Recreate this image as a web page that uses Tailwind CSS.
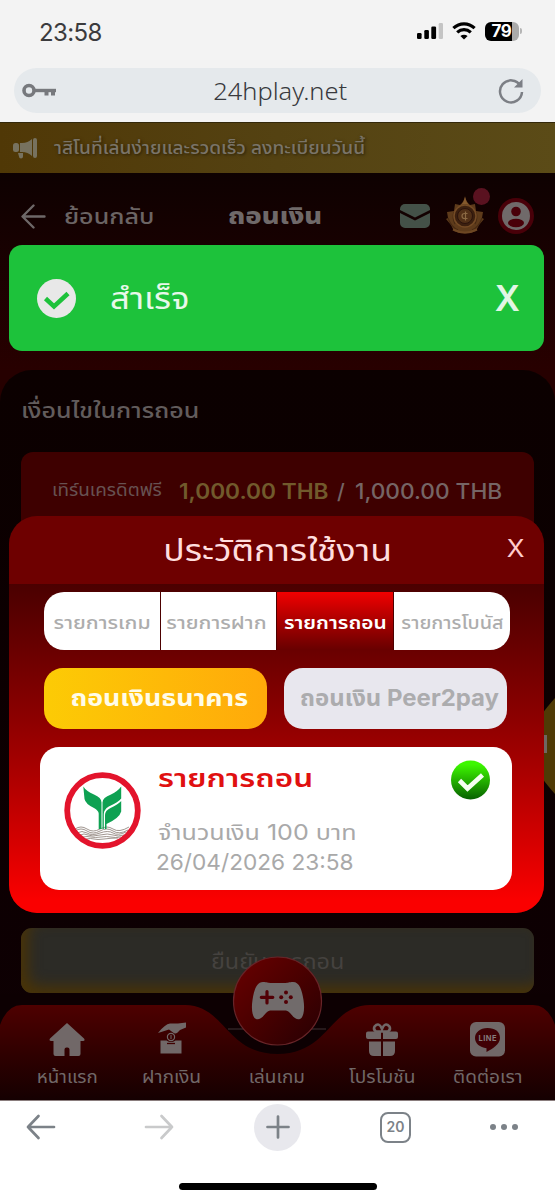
<!DOCTYPE html>
<html lang="th">
<head>
<meta charset="utf-8">
<meta name="viewport" content="width=device-width, initial-scale=1">
<title>24hplay.net</title>
<script src="https://cdn.jsdelivr.net/npm/@tailwindcss/browser@4"></script>
</head>
<body class="w-[555px] h-[1200px] overflow-hidden bg-white">
<div class="relative w-[555px] h-[1200px] overflow-hidden flex flex-col font-['Inter','Noto_Sans_Thai','Noto_Sans',sans-serif] whitespace-nowrap">

  <!-- Status bar and address bar -->
  <header class="h-[122px] shrink-0 bg-[#f3f3f3] flex flex-col">
    <div class="h-[66px] pl-[39px] pr-[33px] flex items-center justify-between">
      <span class="text-[24px] leading-none text-[#3b3b3d] tracking-[-0.6px]">23:58</span>
      <div class="flex items-center gap-[9px] pb-[4px]">
        <svg width="27" height="18" viewBox="0 0 27 18"><rect x="1" y="11" width="4.600" height="6" rx="1.300"/><rect x="8.300" y="8" width="4.600" height="9" rx="1.300"/><rect x="15.300" y="4.500" width="4.800" height="12.500" rx="1.300"/><rect x="22.700" y="1" width="4.300" height="16" rx="1.300" fill="#c4c4c4"/></svg>
        <svg width="24" height="18" viewBox="0 0 24 18" fill="none" stroke="#000" stroke-width="3.200"><path d="M1.400 6.200C7.500.500 16.500.500 22.600 6.200"/><path d="M5.200 10.400c4-3.600 9.600-3.600 13.600 0"/><path d="M12 17.500 8.400 14c2.200-1.700 5-1.700 7.200 0z" fill="#000" stroke="none"/></svg>
        <div class="flex items-center gap-[1.500px]">
          <div class="w-[34px] h-[19px] rounded-[6px] bg-linear-to-r from-[#000] from-80% to-[#aaa] to-80% flex items-center justify-center"><span class="text-white font-bold text-[17px] leading-none tracking-[-0.5px]">79</span></div>
          <div class="w-[2px] h-[6px] rounded-r bg-[#b5b5b5]"></div>
        </div>
      </div>
    </div>
    <div class="mt-[2px] mx-[14px] h-[45px] rounded-full bg-[#e5e9ec] flex items-center justify-between pl-[8px] pr-[17px]">
      <svg width="35" height="15" viewBox="0 0 35 15" fill="none" stroke="#77797d"><circle cx="7" cy="7.500" r="5" stroke-width="3.600"/><path d="M12 7.500h22" stroke-width="3.400"/><path d="M24.500 7v5.500M31 7v5.500" stroke-width="4"/></svg>
      <span class="scale-x-[1.06] font-['Noto_Sans'] font-light text-[24px] leading-none text-[#38393d] mr-[-5px]">24hplay.net</span>
      <svg width="26" height="26" viewBox="0 0 26 26" fill="none" stroke="#7c7f85" stroke-width="2.500"><path d="M22.500 7.800A11 11 0 1 0 24 14"/><path d="M24.500 1v8.500h-8.500z" fill="#7c7f85" stroke="none"/></svg>
    </div>
  </header>

  <!-- Dimmed page -->
  <main class="h-[978px] shrink-0 bg-[#0c0002] flex flex-col">
    <div class="h-[51px] shrink-0 border-t border-[#33280a] bg-linear-to-r from-[#503806] via-[#544212] to-[#5b4b17] flex items-center pl-[13px] gap-4">
      <svg width="25" height="21" viewBox="0 0 25 21" fill="#77725f"><rect x="0" y="5" width="6" height="9" rx="2.500"/><path d="M7 5h2c4 0 7-1.500 10-4v17c-3-2.500-6-4-10-4H7z"/><rect x="20" y="0" width="4" height="20" rx="2"/><path d="M5 15h5v3.500a2 2 0 0 1-4 0z"/></svg>
      <span class="origin-left scale-x-[1.062] text-[18px] font-medium leading-none text-[#7a7468] [text-shadow:1px_1px_3px_#0008]">าสิโนที่เล่นง่ายและรวดเร็ว ลงทะเบียนวันนี้</span>
    </div>
    <div class="h-[197px] shrink-0 bg-linear-to-b from-[#0e0101] to-[#280000]">
      <div class="h-[86px] flex items-center pl-[21px] pr-[21px]">
        <svg width="25" height="25" viewBox="0 0 25 25" fill="none" stroke="#6e6868" stroke-width="2.400" stroke-linecap="round" stroke-linejoin="round"><path d="M12.500 1.500 1.500 12.500l11 11M2 12.500h21.500"/></svg>
        <span class="ml-[18px] w-[91px] origin-left scale-x-[1.14] text-[22px] font-medium leading-none text-[#6b6464]">ย้อนกลับ</span>
        <span class="ml-[73px] w-[94px] origin-left scale-x-[1.19] text-[23px] font-extrabold leading-none text-[#6f6969]">ถอนเงิน</span>
        <div class="ml-[78px] flex items-center gap-[16px]">
          <svg width="30" height="25" viewBox="0 0 30 25" fill="#445148"><path d="M0 6V5a5 5 0 0 1 5-5h20a5 5 0 0 1 5 5v1L15 13.500z"/><path d="M0 9l15 7.500L30 9v10a5 5 0 0 1-5 5H5a5 5 0 0 1-5-5z"/></svg>
          <div class="relative w-[38px] h-[38px] mt-[-2px]">
            <svg width="38" height="38" viewBox="0 0 38 38">
              <path d="M19 0Q20 6 24 9l5-1 1 7 7 1-1 6 2 1-5 6-3 6q-11 5-22 0l-3-6-5-6 2-1-1-6 7-1 1-7 5 1Q18 6 19 0z" fill="#5e3b1b"/>
              <path d="M2 22q3 9 10 12M36 22q-3 9-10 12M8 16q-2 6 1 12M30 16q2 6-1 12" stroke="#472a13" stroke-width="1.200" fill="none"/>
              <path d="M19 1q-1 5-4 8 4-2 8 0-3-3-4-8z" fill="#84592c"/>
              <circle cx="19" cy="20" r="11" fill="#3c200f" stroke="#744b25" stroke-width="1.500"/><circle cx="19" cy="20" r="7.500" fill="#513017" stroke="#2b130c"/>
              <path d="M21.500 17.500h-3a2.500 2.500 0 0 0 0 5h3M19.500 15.500v9" stroke="#8b6a44" stroke-width="1.200" fill="none"/>
              <path d="M7 33.500c8 4 16 4 24 0" stroke="#6e4723" stroke-width="2" fill="none"/></svg>
            <div class="absolute left-[27px] top-[-8px] w-[17px] h-[17px] rounded-full bg-[#5a1220]"></div>
          </div>
          <svg class="ml-[-2px]" width="36" height="36" viewBox="0 0 36 36"><circle cx="18" cy="18" r="18" fill="#490009"/><circle cx="18" cy="18" r="14" fill="#706a6a"/><circle cx="18" cy="13.500" r="4.800" fill="#490009"/><ellipse cx="18" cy="25" rx="8" ry="4.200" fill="#490009"/></svg>
        </div>
      </div>
    </div>
    <section class="h-[730px] shrink-0 bg-[#260000]">
      <div class="h-full rounded-t-[32px] bg-linear-to-b from-[#0b0000] to-[#0e0003] flex flex-col">
        <h2 class="mt-[28px] ml-[21px] h-[54px] pt-[1px] origin-left scale-x-[1.137] text-[22px] font-medium leading-none text-[#625c5c]">เงื่อนไขในการถอน</h2>
        <div class="mx-[21px] h-[144px] shrink-0 rounded-[12px] bg-[#3e0000] pl-[31px] pt-[29px]">
          <div class="flex items-center h-[20px]">
            <div class="w-[127px] flex"><span class="origin-left scale-x-[1.11] text-[17px] leading-none text-[#675252] -mt-0.5">เทิร์นเครดิตฟรี</span></div>
            <div class="w-[158px] flex"><span class="origin-left scale-x-[1.08] text-[21px] font-semibold leading-none text-[#715a2c]">1,000.00 THB</span></div>
            <span class="w-[18px] text-[21px] font-medium leading-none text-[#756565]">/</span>
            <span class="origin-left scale-x-[1.08] text-[21px] font-medium leading-none text-[#756565]">1,000.00 THB</span>
          </div>
        </div>
        <div class="relative h-[332px] shrink-0 overflow-hidden">
          <svg class="absolute right-0 top-[102px]" width="20" height="96" viewBox="0 0 20 96"><path d="M20 0Q4 18 0 28v40q4 10 20 28z" fill="#4f3a05"/><rect x="8" y="37" width="4" height="18" fill="#6f6762"/></svg>
        </div>
      </div>
    </section>
  </main>

  <!-- Confirm button, partly under the bottom navigation -->
  <button class="absolute left-[21px] top-[928px] w-[513px] h-[65px] rounded-[11px] bg-[#2c2b26] shadow-[inset_7px_-7px_14px_#493307] text-[22px] leading-none text-[#45423f]"><span class="inline-block scale-x-[1.065]">ยืนยันการถอน</span></button>

  <nav class="absolute left-0 top-[950px] w-[555px] h-[150px]">
    <svg class="absolute inset-0" width="555" height="150" viewBox="0 0 555 150">
      <defs>
        <linearGradient id="nav" x1="0" y1="0" x2="0" y2="1"><stop offset="0" stop-color="#4e0000"/><stop offset=".5" stop-color="#300000"/><stop offset="1" stop-color="#150001"/></linearGradient>
        <linearGradient id="orb" x1="0" y1="0" x2="1" y2="1"><stop offset="0" stop-color="#6a0000"/><stop offset=".45" stop-color="#4c0000"/><stop offset="1" stop-color="#260003"/></linearGradient>
      </defs>
      <path d="M0 44h555v106H0z" fill="#0d0002"/>
      <path d="M228 79h98" stroke="#413334"/>
      <path d="M0 75Q7 55 22 55H185C225 55 226 104 277.500 104S330 55 370 55H533Q548 55 555 75V150H0z" fill="url(#nav)"/>
      <circle cx="277.500" cy="51" r="44" fill="url(#orb)" stroke="#682428" stroke-width="1.200"/>
      <path d="M263 32c4 0 5 1 8 1h14c3 0 4-1 8-1 6.500 0 9 8 10.500 18 1.500 10 0 17.500-3.500 19-4 1.500-7.500-3-10-6-2-2-3-2.500-6-2.500h-12c-3 0-4 .5-6 2.500-2.500 3-6 7.500-10 6-3.500-1.500-5-9-3.500-19 1.500-10 4-18 10.500-18z" fill="#716b6b"/>
      <path d="M267 41.500v11.500M261.300 47.300h11.500" stroke="#520006" stroke-width="3.200" stroke-linecap="round"/>
      <g fill="#520006"><circle cx="286" cy="42.500" r="2"/><circle cx="286" cy="52" r="2"/><circle cx="281.200" cy="47.300" r="2"/><circle cx="290.800" cy="47.300" r="2"/></g>
    </svg>
    <div class="relative h-full grid grid-cols-[134px_76px_134px_76px_135px] pt-[72px] text-[18px] leading-none text-[#716868]">
      <div class="flex flex-col items-center gap-[10px]"><svg width="36" height="36" viewBox="0 0 36 36" fill="#716868"><path d="M18 1 1 16.500q-1.500 2.500 1.500 2.500H4.500V32q0 2 2 2h9V27.500q0-2 2-2h1q2 0 2 2V34h9q2 0 2-2V19h2.500q2.500 0 1-2.500z"/></svg><span class="scale-x-[1.04]">หน้าแรก</span></div>
      <div class="flex flex-col items-center gap-[10px]"><svg width="30" height="36" viewBox="0 0 30 36" fill="#716868"><path d="M1 11Q8 2 13 1.500h8L29 0.500v5L23 8l-3 3q-2 1-4-.5l-4-3z"/><circle cx="14" cy="15" r="3.600" fill="none" stroke="#716868" stroke-width="1.200"/><path d="M14 13v4" stroke="#716868"/><path d="M3.500 18.500H9.500q4.500 3 9 0h6V31.500h-21z"/><path d="M10 21.500h8" stroke="#400000" stroke-width="1.300"/></svg><span class="scale-x-[1.07]">ฝากเงิน</span></div>
      <div class="flex flex-col items-center gap-[10px]"><span class="h-9"></span><span class="scale-x-[1.05]">เล่นเกม</span></div>
      <div class="flex flex-col items-center gap-[10px]"><svg width="32" height="36" viewBox="0 0 32 36" fill="#716868"><path d="M2 9.500h13V17H2q-2 0-2-2v-3.500q0-2 2-2zM17 9.500h13q2 0 2 2V15q0 2-2 2H17zM3 19.500h12V34H8q-5 0-5-5zM17 19.500h12V29q0 5-5 5h-7z"/><path d="M15 9.500h-5q-3-2-1.500-5Q13-.5 16 7q3-7.500 7.500-2.500 1.500 3-1.500 5z" fill="none" stroke="#716868" stroke-width="2.600"/></svg><span class="scale-x-[1.06]">โปรโมชัน</span></div>
      <div class="flex flex-col items-center gap-[10px]"><svg width="35" height="36" viewBox="0 0 35 36"><rect y="0" width="35" height="34.500" rx="6" fill="#716868"/><path d="M17.500 6C10 6 5 10.500 5 16s5 9.500 11.500 10.200V30C22 27 30 22.500 30 16S25 6 17.500 6z" fill="#400004"/><text x="17.500" y="19" text-anchor="middle" font-family="Inter" font-weight="700" font-size="7.500" textLength="18" fill="#857b7b">LINE</text></svg><span class="scale-x-[1.06]">ติดต่อเรา</span></div>
    </div>
  </nav>

  <!-- Success toast -->
  <div class="absolute left-[9px] top-[245px] w-[535px] h-[106px] rounded-[13px] bg-[#1dc23b] flex items-center pl-[28px] pr-[24px]">
    <svg width="39" height="39" viewBox="0 0 39 39"><circle cx="19.500" cy="19.500" r="19.500" fill="#e8e8e8"/><path d="M8.500 19.500l8.500 8L31 14.500" fill="none" stroke="#1dc23b" stroke-width="4.500"/></svg>
    <span class="ml-[34px] origin-left scale-x-[1.16] text-[30px] leading-none text-[#e8f8ea]">สำเร็จ</span>
    <span class="ml-auto text-[35px] font-semibold leading-none text-[#e2f6e5]">X</span>
  </div>

  <!-- History dialog -->
  <div class="absolute left-[9px] top-[516px] w-[535px] h-[397px] rounded-[28px] overflow-hidden bg-[#6e0000] flex flex-col">
    <div class="relative h-[68px] shrink-0 flex items-center justify-center">
      <h1 class="scale-x-[1.185] text-[30px] leading-none text-[#ffdede] mr-[-3px]">ประวัติการใช้งาน</h1>
      <span class="absolute right-[20px] top-[21px] origin-right scale-x-[1.08] text-[24px] leading-none text-[#ffcccc]">X</span>
    </div>
    <div class="grow bg-linear-to-b from-[#4a0000] via-[#a00000] via-52% to-[#fa0000] to-96% pt-[8px] pl-[31px]">
      <div class="ml-1 w-[466px] h-[58px] rounded-[20px] overflow-hidden grid grid-cols-[116px_115px_116px_116px] gap-x-[1px] text-[18px] font-medium leading-none text-[#adadad] bg-[#4c0000]">
        <div class="bg-white flex items-center justify-center pt-1"><span class="scale-x-[1.18]">รายการเกม</span></div>
        <div class="bg-white flex items-center justify-center pt-1 pr-1"><span class="scale-x-[1.18]">รายการฝาก</span></div>
        <div class="bg-linear-to-b from-[#f20000] to-[#680000] text-white font-semibold flex items-center justify-center pt-1"><span class="scale-x-[1.16]">รายการถอน</span></div>
        <div class="bg-white flex items-center justify-center pt-1"><span class="scale-x-[1.1]">รายการโบนัส</span></div>
      </div>
      <div class="ml-1 mt-[18px] flex gap-[17px] text-[23px] leading-none font-bold">
        <div class="w-[223px] h-[61px] rounded-[19px] bg-linear-to-r from-[#fccb05] to-[#ffa90a] text-[#fffce8] flex items-center justify-center pl-2"><span class="scale-x-[1.165]">ถอนเงินธนาคาร</span></div>
        <div class="w-[223px] h-[61px] rounded-[19px] bg-[#e8e7ee] text-[#acacae] flex items-center justify-center pl-2"><span class="scale-x-[1.042]">ถอนเงิน Peer2pay</span></div>
      </div>
      <div class="mt-[18px] w-[472px] h-[143px] rounded-[19px] bg-white flex">
        <svg class="ml-[23.500px] mt-[24.500px] shrink-0" width="77" height="77" viewBox="0 0 77 77">
          <circle cx="38.500" cy="38.500" r="35" fill="#fff"/>
          <path d="M11 57q6-4 12 0t13 0 13 0 16-2M11 59q6-4 12 0t13 0 13 0 15-1M13 61q5-3 10 0t13 0 13 0 13-1M16 63q4-2 8 0t12 0 13 0 11 0M19 65q4-1 8 0t10 0 10 0 10 0M22 67q5-1 8 0t10 0 14-1" fill="none" stroke="#958a83" stroke-width=".9"/>
          <path d="M19.300 14.500Q22 19 30 22.500q7.500 3 7.500 8V57h-2.800V41.500q-.2-3-4.700-5.500-8.500-4-9.500-9z" fill="#0ea152"/>
          <path d="M57.200 14.500Q54 19 47 22.500q-8.500 3-8.500 8V57h1.300V42q0-4.500 5-7.500 10-4.500 12.400-8z" fill="#0ea152"/>
          <path d="M57.200 29Q54 32.500 46.500 36q-5.500 2.500-5.500 7V57h1.500v-5q13-6 14.700-12.500z" fill="#0ea152"/>
          <circle cx="38.500" cy="38.500" r="35.300" fill="none" stroke="#e3142c" stroke-width="5.800"/>
        </svg>
        <div class="ml-[17.500px] pt-[19px] grow flex flex-col items-start">
          <div class="h-[24px] origin-left scale-x-[1.26] text-[25px] font-semibold leading-[24px] text-[#e01010]">รายการถอน</div>
          <div class="mt-[27px] h-[30px] origin-left scale-x-[1.14] text-[22px] leading-[30px] text-[#a9a9a9]">จำนวนเงิน 100 บาท</div>
          <div class="ml-[-2px] h-[30px] origin-left scale-x-[1.03] text-[22px] leading-[30px] text-[#a9a9a9]">26/04/2026 23:58</div>
        </div>
        <svg class="mt-[13px] mr-[22px] shrink-0" width="39" height="40" viewBox="0 0 39 40"><defs><linearGradient id="ok" x1="0" y1="0" x2="0" y2="1"><stop offset=".1" stop-color="#3df700"/><stop offset="1" stop-color="#066000"/></linearGradient></defs><circle cx="19.500" cy="20" r="19.500" fill="url(#ok)"/><path d="M8.500 20.500l8 8L31.500 15" fill="none" stroke="#f4fff0" stroke-width="4.600"/></svg>
      </div>
    </div>
  </div>

  <!-- Browser toolbar -->
  <footer class="h-[100px] shrink-0 bg-white flex flex-col items-center border-t border-[#8a7d7d]">
    <div class="h-[52px] w-full flex items-center pl-[26px]">
      <svg width="30" height="26" viewBox="0 0 30 26" fill="none" stroke="#7c8288" stroke-width="2.700" stroke-linecap="round" stroke-linejoin="round"><path d="M12.500 2 2 13l10.500 11M2 13h26"/></svg>
      <svg class="ml-[88px]" width="30" height="26" viewBox="0 0 30 26" fill="none" stroke="#c9cacb" stroke-width="2.700" stroke-linecap="round" stroke-linejoin="round"><path d="M17.500 2 28 13 17.500 24M28 13H2"/></svg>
      <div class="ml-[80px] w-[47px] h-[47px] rounded-full bg-[#e8e8ed] flex items-center justify-center"><svg width="24" height="24" viewBox="0 0 24 24" stroke="#7c8288" stroke-width="2.700" stroke-linecap="round"><path d="M12 1.500v21M1.500 12h21"/></svg></div>
      <div class="ml-[79px] w-[31px] h-[31px] rounded-[8px] border-[2.500px] border-[#7c8288] flex items-center justify-center text-[14px] font-semibold leading-none text-[#7c8288]">20</div>
      <svg class="ml-[78px]" width="30" height="8" viewBox="0 0 30 8" fill="#7c8288"><circle cx="4" cy="4" r="3"/><circle cx="15" cy="4" r="3"/><circle cx="26" cy="4" r="3"/></svg>
    </div>
    <div class="mt-[30px] w-[198px] h-[7px] rounded-full bg-black"></div>
  </footer>
</div>
</body>
</html>
